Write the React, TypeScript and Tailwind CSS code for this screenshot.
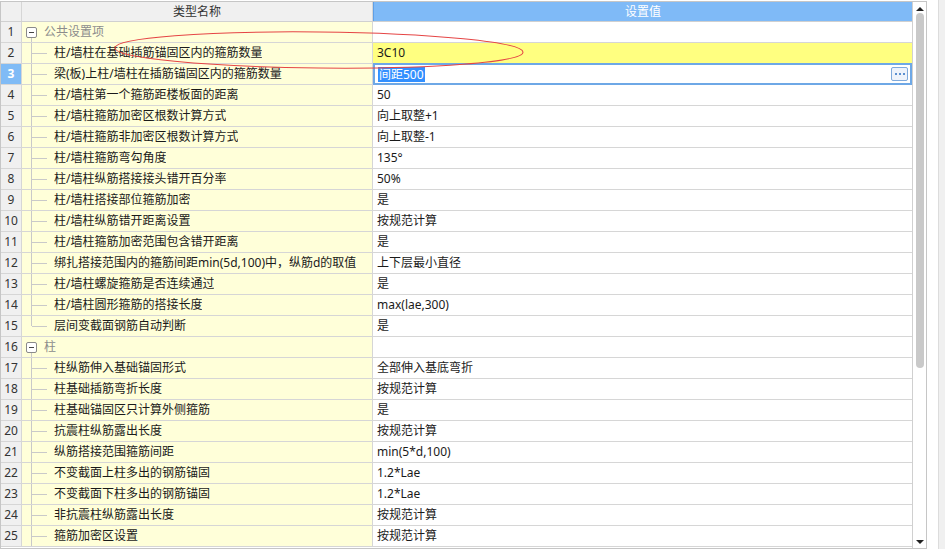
import React from "react";

type Row =
  | { kind: "group"; label: string }
  | { kind: "item"; label: string; value: string; last?: boolean };

const ROWS: Row[] = [
  { kind: "group", label: "公共设置项" },
  { kind: "item", label: "柱/墙柱在基础插筋锚固区内的箍筋数量", value: "3C10" },
  { kind: "item", label: "梁(板)上柱/墙柱在插筋锚固区内的箍筋数量", value: "间距500" },
  { kind: "item", label: "柱/墙柱第一个箍筋距楼板面的距离", value: "50" },
  { kind: "item", label: "柱/墙柱箍筋加密区根数计算方式", value: "向上取整+1" },
  { kind: "item", label: "柱/墙柱箍筋非加密区根数计算方式", value: "向上取整-1" },
  { kind: "item", label: "柱/墙柱箍筋弯勾角度", value: "135°" },
  { kind: "item", label: "柱/墙柱纵筋搭接接头错开百分率", value: "50%" },
  { kind: "item", label: "柱/墙柱搭接部位箍筋加密", value: "是" },
  { kind: "item", label: "柱/墙柱纵筋错开距离设置", value: "按规范计算" },
  { kind: "item", label: "柱/墙柱箍筋加密范围包含错开距离", value: "是" },
  { kind: "item", label: "绑扎搭接范围内的箍筋间距min(5d,100)中，纵筋d的取值", value: "上下层最小直径" },
  { kind: "item", label: "柱/墙柱螺旋箍筋是否连续通过", value: "是" },
  { kind: "item", label: "柱/墙柱圆形箍筋的搭接长度", value: "max(lae,300)" },
  { kind: "item", label: "层间变截面钢筋自动判断", value: "是", last: true },
  { kind: "group", label: "柱" },
  { kind: "item", label: "柱纵筋伸入基础锚固形式", value: "全部伸入基底弯折" },
  { kind: "item", label: "柱基础插筋弯折长度", value: "按规范计算" },
  { kind: "item", label: "柱基础锚固区只计算外侧箍筋", value: "是" },
  { kind: "item", label: "抗震柱纵筋露出长度", value: "按规范计算" },
  { kind: "item", label: "纵筋搭接范围箍筋间距", value: "min(5*d,100)" },
  { kind: "item", label: "不变截面上柱多出的钢筋锚固", value: "1.2*Lae" },
  { kind: "item", label: "不变截面下柱多出的钢筋锚固", value: "1.2*Lae" },
  { kind: "item", label: "非抗震柱纵筋露出长度", value: "按规范计算" },
  { kind: "item", label: "箍筋加密区设置", value: "按规范计算" },
];

const FONT = { fontFamily: '"Noto Sans", "Noto Sans CJK SC", sans-serif' };

function NameCell({ row }: { row: Row }) {
  if (row.kind === "group") {
    return (
      <div className="relative flex h-full items-center bg-[#ffffd9] pl-[4px]">
        <span className="flex h-[11px] w-[11px] items-center justify-center rounded-[2px] border border-[#8a8a8a] bg-white">
          <span className="h-px w-[5px] bg-[#444]" />
        </span>
        <span className="absolute bottom-0 left-[9px] top-[16px] w-px bg-[#c9c9c9]" />
        <span className="ml-[7px] text-[#8c8c8c]">{row.label}</span>
      </div>
    );
  }
  return (
    <div className="relative flex h-full items-center bg-[#ffffd9] pl-[32px]">
      <span className={`absolute left-[9px] top-0 w-px bg-[#c9c9c9] ${row.last ? "h-1/2" : "h-full"}`} />
      <span className="absolute left-[10px] top-1/2 h-px w-[15px] bg-[#c9c9c9]" />
      <span className="truncate text-[#1a1a1a]">{row.label}</span>
    </div>
  );
}

function ValueCell({ row, index }: { row: Row; index: number }) {
  if (row.kind === "group") return <div className="h-full bg-white" />;
  if (index === 1) {
    return <div className="flex h-full items-center bg-[#ffff80] pl-[4px] text-[#1a1a1a]">{row.value}</div>;
  }
  if (index === 2) {
    return (
      <div className="flex h-[22px] -mt-px items-center justify-between border-2 border-[#6ea8e6] bg-white pl-[3px] pr-[2px]">
        <span className="bg-[#3390ff] px-px leading-[15px] text-white">{row.value}</span>
        <span className="flex h-[14px] w-[17px] items-center justify-center gap-[2px] rounded-[2px] border border-[#7fa9db] bg-[#eef3fb]">
          <span className="h-[2px] w-[2px] bg-[#5b8fd0]" />
          <span className="h-[2px] w-[2px] bg-[#5b8fd0]" />
          <span className="h-[2px] w-[2px] bg-[#5b8fd0]" />
        </span>
      </div>
    );
  }
  return <div className="flex h-full items-center bg-white pl-[4px] text-[#1a1a1a]">{row.value}</div>;
}

export default function App() {
  return (
    <div className="flex h-[549px] w-[945px] overflow-hidden bg-white text-[12px]" style={FONT}>
      <div className="relative mt-px flex h-[548px] w-[927px] border border-[#c6c6c6]">
        <div className="flex w-[911px] flex-col">
          {/* header */}
          <div className="flex h-[20px] shrink-0 border-b border-[#d0d0d0]">
            <div className="w-[21px] border-r border-[#d6d6d6] bg-[#f0f0f0]" />
            <div className="flex w-[351px] items-center justify-center border-r border-[#d6d6d6] bg-[#f0f0f0] text-[#333]">
              类型名称
            </div>
            <div className="flex flex-1 items-center justify-center border-l border-[#5f9fe6] bg-[#7fbaf7] text-white">
              设置值
            </div>
          </div>
          {ROWS.map((row, i) => (
            <div key={i} className="flex h-[21px] shrink-0 border-b border-[#d6d6d6]">
              <div
                className={`flex w-[21px] items-center justify-center border-r border-[#d6d6d6] text-[12px] ${
                  i === 2 ? "bg-[#80bbf6] font-bold text-white" : "bg-[#f0f0f0] text-[#333]"
                }`}
              >
                {i + 1}
              </div>
              <div className="w-[351px] border-r border-[#d6d6d6]">
                <NameCell row={row} />
              </div>
              <div className="flex-1">
                <ValueCell row={row} index={i} />
              </div>
            </div>
          ))}
        </div>
        {/* scrollbar */}
        <div className="flex w-[14px] flex-col items-center border-l border-[#d0d0d0] bg-white">
          <span className="mt-[5px] h-0 w-0 border-x-[4px] border-b-[4px] border-x-transparent border-b-[#222]" />
          <span className="mt-[2px] h-[355px] w-[8px] rounded-[4px] bg-[#c9c9c9]" />
          <span className="mt-auto mb-[4px] h-0 w-0 border-x-[4px] border-t-[4px] border-x-transparent border-t-[#222]" />
        </div>
        <svg className="pointer-events-none absolute left-0 top-0" width="927" height="547">
          <ellipse cx="318" cy="48" rx="204" ry="18" fill="none" stroke="#e54545" strokeWidth="1" transform="rotate(0.6 318 48)" />
        </svg>
      </div>
      <div className="w-[11px] bg-white" />
      <div className="w-px bg-[#dcdcdc]" />
      <div className="flex-1 bg-[#f0f0f0]" />
    </div>
  );
}
